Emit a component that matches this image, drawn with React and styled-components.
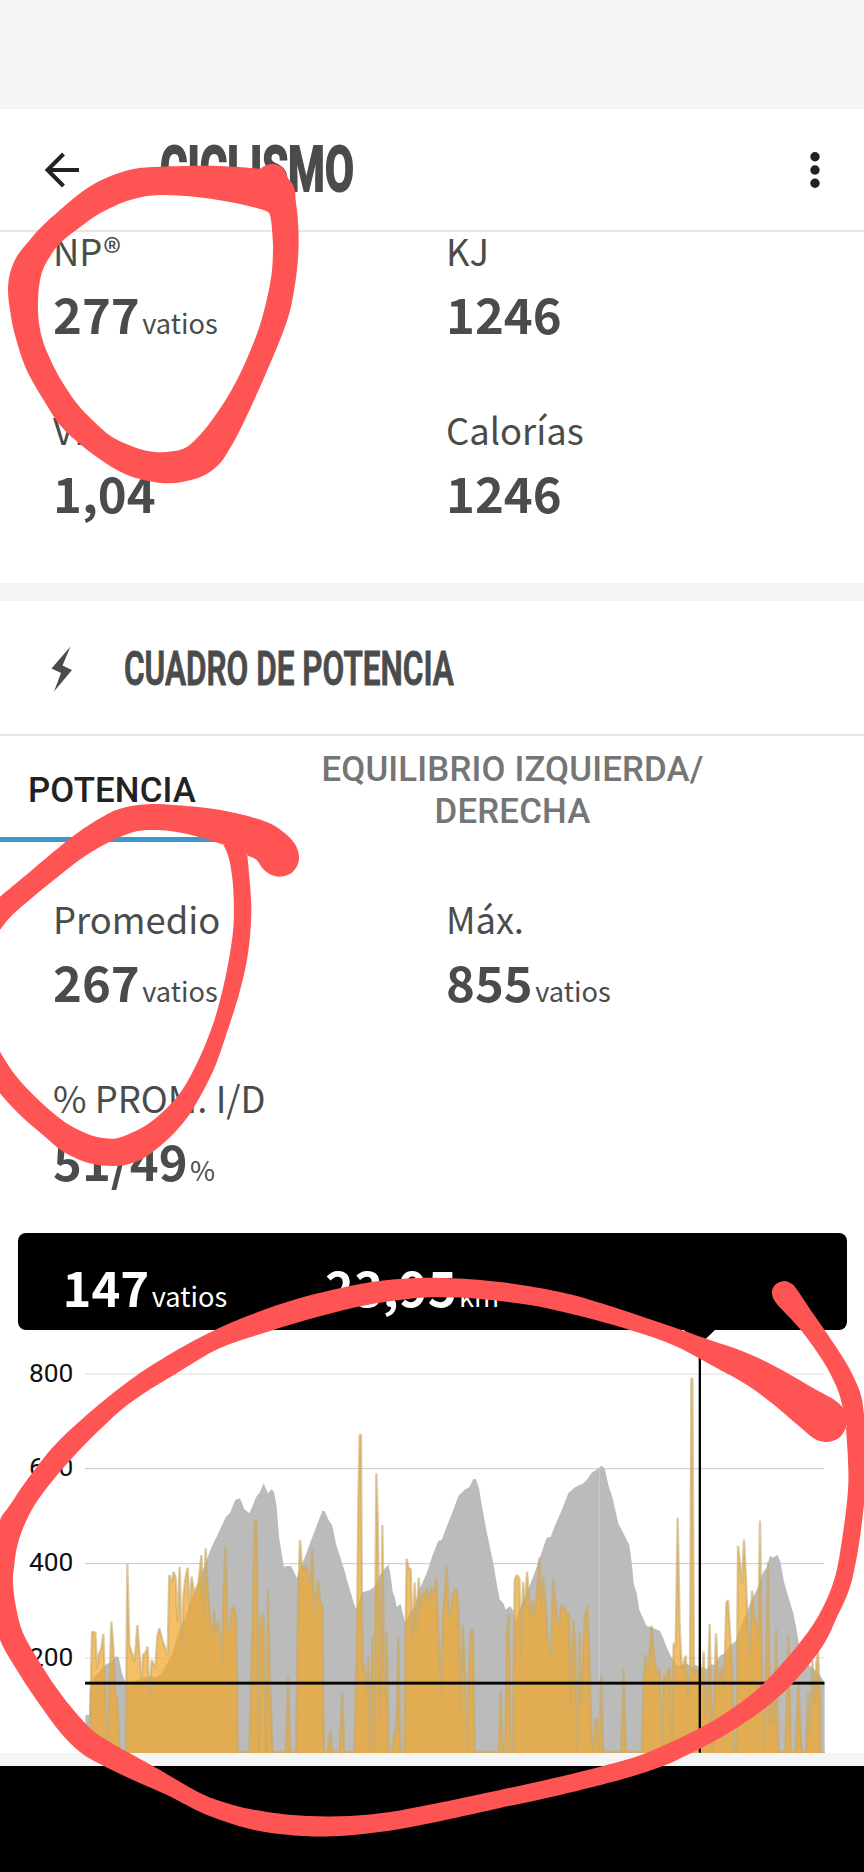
import React from "react";
import styled, { createGlobalStyle } from "styled-components";

const Global = createGlobalStyle`
  * { box-sizing: border-box; }
  body { margin: 0; background: #fff; }
`;

const sans = `"Noto Sans CJK JP", "Noto Sans", sans-serif`;
const ink = "#4a4c4b";

const Screen = styled.div`
  position: relative;
  width: 864px;
  height: 1872px;
  overflow: hidden;
  display: flex;
  flex-direction: column;
  background: #fff;
  color: ${ink};
  font-family: ${sans};
`;

const StatusArea = styled.div`
  height: 109px;
  flex: none;
  background: #f5f5f5;
`;

const Toolbar = styled.header`
  height: 123px;
  flex: none;
  display: flex;
  align-items: center;
  padding: 1px 43px 0 42px;
  border-bottom: 2px solid #e5e5e5;
`;

const ToolbarTitle = styled.h1`
  flex: 1;
  margin: 0 0 0 78px;
  font: 700 62.5px/70px Roboto, sans-serif;
  -webkit-text-stroke: 2.2px ${ink};
  transform: scaleX(${(p) => p.$squeeze});
  transform-origin: left center;
  white-space: nowrap;
`;

const Stats = styled.section`
  flex: none;
  height: ${(p) => p.$height}px;
  padding: ${(p) => p.$top}px 0 0 53px;
`;

const StatGrid = styled.div`
  display: grid;
  grid-template-columns: 393px 1fr;
  row-gap: 53.5px;
  margin-top: ${(p) => p.$shift || 0}px;
`;

const StatLabel = styled.div`
  font-size: 36.4px;
  line-height: 54px;
  white-space: nowrap;
`;

const StatValue = styled.div`
  display: flex;
  align-items: baseline;
  gap: 2.5px;
  font-size: 49px;
  font-weight: 700;
  line-height: 71px;
`;

const Unit = styled.span`
  font-size: 27.2px;
  font-weight: 400;
  line-height: 1;
`;

const Band = styled.div`
  flex: none;
  height: ${(p) => p.$height}px;
  background: #f5f5f5;
`;

const SectionHead = styled.div`
  flex: none;
  height: 135px;
  display: flex;
  align-items: center;
  padding: 2px 0 0 51px;
  border-bottom: 2px solid #e5e5e5;
`;

const SectionTitle = styled.h2`
  margin: 0 0 0 51px;
  font: 600 48.5px/60px Roboto, sans-serif;
  -webkit-text-stroke: 0.9px ${ink};
  transform: scaleX(${(p) => p.$squeeze});
  transform-origin: left center;
  white-space: nowrap;
`;

const Tabs = styled.nav`
  flex: none;
  height: 106px;
  display: flex;
`;

const Tab = styled.div`
  width: ${(p) => p.$width}px;
  display: flex;
  align-items: center;
  justify-content: center;
  text-align: center;
  border-bottom: 5px solid ${(p) => (p.$active ? "#4196c8" : "transparent")};
  color: ${(p) => (p.$active ? "#222" : "#757575")};
  font: 500 34.8px/41.3px Roboto, sans-serif;
  letter-spacing: 0.15px;
  padding-top: 8px;
`;

const Readout = styled.div`
  flex: none;
  display: flex;
  width: 829px;
  height: 97px;
  margin: 0 0 0 17.5px;
  padding: 17px 0 0 45px;
  border-radius: 8px;
  background: #000;
  color: #fff;
`;

const ReadoutCell = styled.div`
  width: 262.5px;
`;

const ChartArea = styled.div`
  flex: none;
  height: 423px;
  svg { display: block; }
`;

const BottomBar = styled.div`
  flex: 1;
  background: #000;
`;

const Marker = styled.svg`
  position: absolute;
  left: 0;
  top: 0;
`;

// Chart coordinates: three units per pixel, y grows downwards, zero line at 1056.
const elevation = `256,945 268,945 270,870 280,835 300,812 320,792 335,785 348,769 356,772 366,820 376,845
380,860 395,848 420,838 450,828 470,832 485,818 500,792 515,765 530,715 545,675 560,640 575,595 592,560
605,520 620,480 635,440 650,410 677,352 690,338 706,300 720,295 733,328 748,340 758,318 768,292 780,275
791,250 804,280 814,268 822,275 830,320 837,410 845,460 852,502 858,498 872,498 880,510 890,534 915,470
930,430 945,390 967,333 974,333 987,362 997,377 1008,432 1025,485 1033,510 1041,540 1050,570 1060,605
1069,628 1087,577 1108,571 1124,560 1140,525 1152,508 1166,494 1173,535 1178,575 1185,595 1190,620
1202,612 1208,640 1216,668 1230,640 1245,615 1260,565 1280,520 1298,465 1315,422 1325,420 1340,380
1358,335 1375,288 1393,270 1408,261 1420,237 1428,238 1437,265 1447,325 1460,395 1480,490 1490,550
1499,598 1510,610 1517,629 1530,619 1540,632 1547,660 1560,625 1580,580 1605,515 1640,413 1652,410
1670,365 1683,335 1705,280 1725,262 1740,254 1746,253 1760,240 1775,219 1788,210 1804,197 1814,205
1825,255 1838,295 1855,370 1870,400 1888,435 1896,495 1901,550 1910,580 1918,630 1940,678 1952,681
1980,693 1990,715 2000,742 2015,773 2030,795 2040,797 2060,790 2075,802 2085,795 2120,807 2132,793
2145,795 2160,767 2175,760 2190,735 2206,725 2220,685 2235,650 2250,610 2270,570 2290,515 2300,503
2310,468 2320,473 2332,464 2341,485 2352,545 2365,590 2380,640 2390,690 2398,740 2420,790 2445,810
2460,825 2474,848`;

const power = `268,1056 276,695 286,698 291,805 296,765 304,745 310,702 322,1056 334,665 340,740 346,880
352,895 359,1056 377,1056 382,492 388,735 404,785 412,675 424,835 430,763 437,758 443,740 448,897 455,780
466,806 472,710 478,685 487,720 503,765 508,525 515,548 521,515 527,535 532,665 539,500 545,735 551,580
557,530 563,503 569,625 575,530 582,580 595,550 604,465 611,635 617,445 622,540 629,640 635,710 642,632
648,700 654,665 660,700 666,785 671,560 677,440 683,680 690,708 696,622 703,625 709,655 714,1056 748,1056
757,700 764,365 770,362 776,1056 781,650 786,680 791,640 798,1056 804,567 810,850 818,1056 857,1056
864,828 871,1056 888,1056 894,600 900,420 906,500 913,510 919,495 930,562 937,440 943,640 954,541 961,605
967,615 972,1056 983,1056 991,990 997,1056 1019,1056 1027,874 1033,1056 1063,1056 1071,700 1075,300
1079,105 1083,105 1086,650 1089,820 1093,788 1100,875 1105,770 1111,1056 1117,708 1123,1056 1129,220
1133,350 1137,600 1141,960 1147,375 1154,885 1160,693 1166,1056 1175,1056 1184,990 1189,1000 1195,714
1202,1056 1213,1056 1218,600 1220,476 1226,505 1232,507 1238,725 1244,548 1250,690 1256,533 1263,630
1268,580 1274,590 1280,565 1286,608 1292,563 1300,580 1309,533 1315,690 1323,877 1328,650 1334,590
1340,497 1345,600 1348,650 1354,635 1357,590 1364,568 1371,570 1376,640 1382,930 1388,675 1394,780
1401,1056 1407,820 1412,692 1419,690 1424,1056 1496,1056 1502,869 1509,1056 1516,1056 1520,700 1526,642
1532,1056 1538,1056 1544,540 1551,525 1558,535 1564,775 1569,545 1575,620 1581,515 1587,590 1593,655
1599,601 1605,645 1611,580 1618,473 1624,610 1630,530 1637,615 1643,715 1653,775 1659,538 1666,600
1672,670 1678,672 1684,612 1690,625 1696,622 1702,650 1707,636 1714,910 1720,660 1726,740 1732,1056
1738,698 1744,915 1750,740 1755,645 1762,617 1768,760 1774,1000 1779,1056 1785,960 1792,956 1797,1056
1804,824 1810,1056 1864,1056 1871,806 1878,1056 1925,1056 1931,830 1937,763 1944,818 1949,760 1955,677
1962,770 1972,827 1979,803 1986,1056 1992,824 1998,845 2003,812 2009,805 2015,1040 2021,728 2027,740
2033,353 2039,680 2045,805 2052,785 2057,767 2064,885 2070,810 2074,-64 2077,-64 2082,830 2088,810
2098,815 2105,860 2111,754 2118,955 2124,850 2129,671 2136,1056 2142,900 2148,700 2155,850 2166,798
2172,870 2179,610 2184,600 2190,700 2196,800 2203,1056 2209,1056 2214,437 2220,490 2226,552 2232,419
2238,540 2244,700 2250,770 2256,572 2263,650 2270,670 2275,712 2280,362 2286,800 2292,1056 2298,800
2304,487 2310,980 2316,850 2322,975 2328,688 2335,1056 2356,1056 2365,706 2373,1056 2386,1056 2395,850
2405,1056 2418,1056 2424,875 2431,1000 2437,780 2444,910 2449,790 2454,755 2460,900 2462,1056 2474,1056`;

const axis = [
  { value: 800, y: -78, weight: 5, color: "#ebebeb" },
  { value: 600, y: 206, weight: 3, color: "#c8c8c8" },
  { value: 400, y: 491, weight: 3, color: "#c8c8c8" },
  { value: 200, y: 774, weight: 5, color: "#ebebeb" },
];

function PowerChart() {
  return (
    <svg width="864" height="423" viewBox="0 -210 2592 1269">
      {axis.map((a) => (
        <rect key={a.value} x="255" y={a.y - a.weight / 2} width="2217" height={a.weight} fill={a.color} />
      ))}
      <polygon points={`256,1059 ${elevation} 2474,1059`} fill="#bbbbbb" />
      <rect x="1797" y="205" width="3" height="640" fill="#c8c8c8" />
      <polygon points={`${power} 2474,1059 268,1059`} fill="#f1a72a" fillOpacity="0.72" />
      <polyline points={power} fill="none" stroke="#c5a96b" strokeOpacity="0.62" strokeWidth="7" strokeLinejoin="bevel" />
      <rect x="255" y="844" width="2218" height="11" fill="#000" fillOpacity="0.5" />
      <rect x="255" y="846.5" width="2218" height="6" fill="#000" />
      <rect x="2096" y="-190" width="7" height="1248" fill="#000" />
      <path d="M2052 -210 H2145 L2099 -166 Z" fill="#000" />
      {axis.map((a) => (
        <text key={a.value} x="220" y={a.y + 23} textAnchor="end" fontFamily="Roboto, sans-serif" fontSize="79" fill="#111">
          {a.value}
        </text>
      ))}
    </svg>
  );
}

// Closed Catmull-Rom spline through the points; a repeated point makes a corner.
function loop(text) {
  const p = text.trim().split(/\s+/).map((s) => s.split(",").map(Number));
  const n = p.length;
  let d = `M${p[0]}`;
  for (let i = 0; i < n; i++) {
    const [a, b, c, e] = [p[(i + n - 1) % n], p[i], p[(i + 1) % n], p[(i + 2) % n]];
    d += `C${b[0] + (c[0] - a[0]) / 6},${b[1] + (c[1] - a[1]) / 6} ${c[0] - (e[0] - b[0]) / 6},${c[1] - (e[1] - b[1]) / 6} ${c}`;
  }
  return d + "Z";
}

const npRing = loop(`780,206 800,195 820,192 840,198 855,213 864,235 876,250 885,272 887,300 893,350 896,420
893,490 884,560 868,640 840,720 800,815 760,905 720,990 690,1045 660,1090 620,1122 570,1141 510,1150
440,1142 370,1120 300,1078 230,1024 180,975 140,915 80,810 45,705 30,630 24,570 30,520 50,470 85,425
125,380 180,330 250,272 320,233 400,207 480,200 620,197 700,200 780,206`)
  + loop(`808,340 808,340 790,330 720,312 620,295 520,286 450,287 380,303 300,340 240,382 180,430 145,478
125,520 115,580 115,650 125,710 145,765 180,835 230,910 280,963 335,1010 400,1040 450,1054 490,1057
545,1048 580,1025 625,975 680,895 730,800 775,690 800,600 815,520 819,450 817,400 813,360`);

const averageRing = loop(`-60,400 0,350 90,275 215,172 300,115 360,86 440,73 520,75 620,84 710,100 800,126
850,156 885,192 897,230 890,260 868,283 835,290 805,280 785,262 770,240 742,226 742,226 748,290 754,380
750,470 738,555 715,650 680,760 645,860 600,950 560,1015 510,1072 450,1122 400,1148 340,1158 270,1150
190,1115 130,1066 60,1005 0,940 -60,860 -120,630`)
  + loop(`-60,700 0,815 50,890 110,955 170,1008 220,1042 280,1068 340,1076 380,1065 440,1035 500,985 550,925
600,830 640,730 670,620 690,520 701,430 700,330 692,260 682,220 670,194 670,194 600,172 530,156 470,150
410,154 340,180 260,225 180,285 100,350 40,402 0,450 -60,540`);

const chartRing = loop(`784,1281 792,1284 798,1291 812,1312 828,1335 845,1361 855,1380 862,1400 866,1440
866,1480 863,1513 858,1550 850,1587 837,1617 822,1647 793,1683 760,1712 720,1738 687,1755 663,1766
623,1779 560,1795 500,1808 450,1819 400,1829 353,1835 320,1836.5 290,1835 250,1829 207,1815 167,1795
133,1780 100,1764 80,1752 60,1732 40,1705 20,1675 0,1640 -6,1610 -9,1575 -6,1545 0,1520 10,1505 27,1480
53,1447 80,1421 107,1398 140,1373 177,1350 213,1331 250,1315 300,1298 360,1284 400,1279 443,1278
500,1282 560,1292 607,1305 667,1325 707,1339 747,1353 780,1369 813,1388 833,1399 842.7,1407 842.7,1407
837,1388 823,1361 800,1329 777,1304 772,1293 775,1285`)
  + loop(`846,1428 846,1428 839,1438 827,1442 815,1439 800,1427 773,1404 747,1385 713,1366 673,1345 630,1330
580,1316 530,1305 480,1299 450,1297.5 417,1298 367,1305 317,1317 267,1332 220,1348 177,1373 137,1398
110,1420 73,1457 43,1493 28,1517 18,1543 14,1567 13,1583 16,1607 23,1633 40,1663 63,1697 90,1728
110,1742 133,1755 160,1770 200,1793 233,1805 267,1812 307,1816 350,1816 390,1812 433,1804 500,1790
560,1776.7 603,1766 647,1752.7 700,1728 733,1708 763,1684 798,1645 820,1613 835,1577 843,1533 848,1490
848,1460`);

function Stat({ label, value, unit }) {
  return (
    <div>
      <StatLabel>{label}</StatLabel>
      <StatValue>{value}{unit && <Unit>{unit}</Unit>}</StatValue>
    </div>
  );
}

export default function App() {
  return (
    <Screen>
      <Global />
      <StatusArea />
      <Toolbar>
        <svg width="40" height="40" viewBox="0 0 40 40" fill="none" stroke="#222" strokeWidth="4">
          <path d="M37 20H5M21.5 4 5.5 20 21.5 36" />
        </svg>
        <ToolbarTitle $squeeze={0.672}>CICLISMO</ToolbarTitle>
        <svg width="12" height="40" viewBox="0 0 12 40" fill="#222">
          <circle cx="6" cy="6.7" r="4.7" />
          <circle cx="6" cy="20" r="4.7" />
          <circle cx="6" cy="33.3" r="4.7" />
        </svg>
      </Toolbar>

      <Stats $height={351} $top={0}>
        <StatGrid $shift={-9}>
          <Stat label="NP®" value="277" unit="vatios" />
          <Stat label="KJ" value="1246" />
          <Stat label="VI" value="1,04" />
          <Stat label="Calorías" value="1246" />
        </StatGrid>
      </Stats>

      <Band $height={18} />

      <SectionHead>
        <svg width="22" height="46" viewBox="0 0 22 46" fill={ink}>
          <path d="M19.5 0.5 0.5 22.5 10 27 3 45.5 21 24 11.5 19.5Z" />
        </svg>
        <SectionTitle $squeeze={0.65}>CUADRO DE POTENCIA</SectionTitle>
      </SectionHead>

      <Tabs>
        <Tab $active $width={224}>POTENCIA</Tab>
        <Tab $width={577}>EQUILIBRIO IZQUIERDA/<br />DERECHA</Tab>
      </Tabs>

      <Stats $height={391} $top={49}>
        <StatGrid>
          <Stat label="Promedio" value="267" unit="vatios" />
          <Stat label="Máx." value="855" unit="vatios" />
          <Stat label="% PROM. I/D" value="51/49" unit="%" />
        </StatGrid>
      </Stats>

      <Readout>
        <ReadoutCell><StatValue>147<Unit>vatios</Unit></StatValue></ReadoutCell>
        <ReadoutCell><StatValue>23,95<Unit>km</Unit></StatValue></ReadoutCell>
      </Readout>

      <ChartArea><PowerChart /></ChartArea>
      <Band $height={13} />
      <BottomBar />

      <Marker width="864" height="1872" viewBox="0 0 864 1872" fill="#ff5454" fillRule="evenodd">
        <path d={npRing} transform="translate(0 100) scale(0.33333)" />
        <path d={averageRing} transform="translate(0 780) scale(0.33333)" />
        <path d={chartRing} />
      </Marker>
    </Screen>
  );
}
